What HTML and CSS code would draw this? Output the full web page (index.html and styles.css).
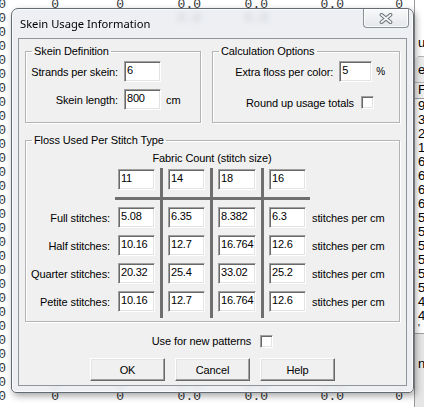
FILE: index.html
```html
<!DOCTYPE html>
<html lang="en">
<head>
  <meta charset="UTF-8">
  <title>Skein Usage Information</title>
  <link rel="stylesheet" href="styles.css">
</head>
<body>
  <div class="desk">
    <!-- spreadsheet behind the dialog -->
    <div class="sheet">
      <div class="cells">
        <div class="row"><span class="a">0</span><span class="b">0</span><span class="c">0</span><span class="d">0.0</span><span class="e">0.0</span><span class="f">0.0</span><span class="g">0</span></div>
        <div class="row"><span class="a">0</span><span class="b"></span><span class="c"></span><span class="d">0.0</span><span class="e">0.0</span></div>
        <div class="row"><span class="a">0</span></div>
        <div class="row"><span class="a">0</span></div>
        <div class="row"><span class="a">0</span></div>
        <div class="row"><span class="a">0</span></div>
        <div class="row"><span class="a">0</span></div>
        <div class="row"><span class="a">0</span></div>
        <div class="row"><span class="a">0</span></div>
        <div class="row"><span class="a">0</span></div>
        <div class="row"><span class="a">0</span></div>
        <div class="row"><span class="a">0</span></div>
        <div class="row"><span class="a">0</span></div>
        <div class="row"><span class="a">0</span></div>
        <div class="row"><span class="a">0</span></div>
        <div class="row"><span class="a">0</span></div>
        <div class="row"><span class="a">0</span></div>
        <div class="row"><span class="a">0</span></div>
        <div class="row"><span class="a">0</span></div>
        <div class="row"><span class="a">0</span></div>
        <div class="row"><span class="a">0</span></div>
        <div class="row"><span class="a">0</span></div>
        <div class="row"><span class="a">0</span></div>
        <div class="row"><span class="a">0</span></div>
        <div class="row"><span class="a">0</span></div>
        <div class="row"><span class="a">0</span></div>
        <div class="row"><span class="a">0</span></div>
        <div class="row"><span class="a">0</span><span class="b">0</span><span class="c">0</span><span class="d">0.0</span><span class="e">0.0</span><span class="f">0.0</span></div>
        <div class="row"><span class="a">0</span><span class="b">0</span><span class="c">0</span><span class="d">0.0</span><span class="e">0.0</span><span class="f">0.0</span><span class="g">0</span></div>
      </div>
      <div class="side">
        <div class="side-blank"></div>
        <div class="side-label">u</div>
        <div class="side-tab">e</div>
        <div class="side-head">F</div>
        <div class="side-num">9</div>
        <div class="side-num">3</div>
        <div class="side-num">2</div>
        <div class="side-num">1</div>
        <div class="side-num">6</div>
        <div class="side-num">6</div>
        <div class="side-num">6</div>
        <div class="side-num">6</div>
        <div class="side-num">5</div>
        <div class="side-num">5</div>
        <div class="side-num">5</div>
        <div class="side-num">5</div>
        <div class="side-num">5</div>
        <div class="side-num">5</div>
        <div class="side-num">4</div>
        <div class="side-num">4</div>
        <div class="side-cut">'</div>
        <div class="side-panel"><span>n..</span></div>
      </div>
    </div>

    <div class="dialog">
      <div class="titlebar">
        <span class="title">Skein Usage Information</span>
        <span class="close">
          <svg width="14" height="11" viewBox="0 0 14 11">
            <path d="M2.5 1.8 L11.5 9.2 M11.5 1.8 L2.5 9.2" stroke="#777c82" stroke-width="3.8" stroke-linecap="round"/>
            <path d="M2.5 1.8 L11.5 9.2 M11.5 1.8 L2.5 9.2" stroke="#fbfbfb" stroke-width="1.6" stroke-linecap="round"/>
          </svg>
        </span>
      </div>

      <div class="client">
        <div class="top">
          <fieldset class="group skein">
            <legend>Skein Definition</legend>
            <div class="form">
              <label>Strands per skein:</label><input class="box" type="text" value="6"><span></span>
              <label>Skein length:</label><input class="box" type="text" value="800"><span class="unit">cm</span>
            </div>
          </fieldset>
          <fieldset class="group calc">
            <legend>Calculation Options</legend>
            <div class="opt extra"><label>Extra floss per color:</label><input class="box small" type="text" value="5"><span class="pct">%</span></div>
            <div class="opt round"><label>Round up usage totals</label><span class="check"></span></div>
          </fieldset>
        </div>

        <fieldset class="group floss">
          <legend>Floss Used Per Stitch Type</legend>
          <div class="caption">Fabric Count (stitch size)</div>
          <div class="table">
            <span class="vline v1"></span>
            <span class="vline v2"></span>
            <span class="vline v3"></span>
            <span class="hline"></span>

            <span></span>
            <input class="box" type="text" value="11">
            <input class="box" type="text" value="14">
            <input class="box" type="text" value="18">
            <input class="box" type="text" value="16">
            <span></span>

            <span></span><span></span>

            <label>Full stitches:</label>
            <input class="box" type="text" value="5.08">
            <input class="box" type="text" value="6.35">
            <input class="box" type="text" value="8.382">
            <input class="box" type="text" value="6.3">
            <span class="per">stitches per cm</span>

            <label>Half stitches:</label>
            <input class="box" type="text" value="10.16">
            <input class="box" type="text" value="12.7">
            <input class="box" type="text" value="16.764">
            <input class="box" type="text" value="12.6">
            <span class="per">stitches per cm</span>

            <label>Quarter stitches:</label>
            <input class="box" type="text" value="20.32">
            <input class="box" type="text" value="25.4">
            <input class="box" type="text" value="33.02">
            <input class="box" type="text" value="25.2">
            <span class="per">stitches per cm</span>

            <label>Petite stitches:</label>
            <input class="box" type="text" value="10.16">
            <input class="box" type="text" value="12.7">
            <input class="box" type="text" value="16.764">
            <input class="box" type="text" value="12.6">
            <span class="per">stitches per cm</span>
          </div>
        </fieldset>

        <div class="usenew"><label>Use for new patterns</label><span class="check"></span></div>

        <div class="buttons">
          <button>OK</button>
          <button>Cancel</button>
          <button>Help</button>
        </div>
      </div>
    </div>
  </div>
</body>
</html>
```

FILE: styles.css
```css
* {
  box-sizing: border-box;
}
body {
  margin: 0;
  background: #fff;
  font-family: "Liberation Sans", Arial, sans-serif;
  font-size: 11px;
  letter-spacing: -0.1px;
  color: #000;
}
.desk {
  position: relative;
  width: 424px;
  height: 407px;
  overflow: hidden;
}

/* background spreadsheet */
.sheet {
  display: flex;
  height: 100%;
}
.cells {
  width: 414px;
  flex: none;
  margin-top: -2px;
  font-family: "Liberation Mono", monospace;
  font-size: 13px;
  letter-spacing: 0;
  color: #333;
}
.row {
  display: flex;
  height: 14px;
  line-height: 14px;
}
.row span {
  flex: none;
  text-align: right;
}
.a { width: 14px; margin-left: -8px; }
.b { width: 53px; }
.c { width: 65px; }
.d { width: 77px; }
.e { width: 67px; }
.f { width: 76px; }
.g { width: 59px; }

.side {
  flex: 1;
  display: flex;
  flex-direction: column;
  border-left: 1px solid #9a9a9a;
  font-size: 13px;
  letter-spacing: 0;
  padding-left: 3px;
  white-space: nowrap;
  overflow: hidden;
}
.side-blank { height: 35px; flex: none; }
.side-label { height: 22px; line-height: 16px; border-bottom: 1px solid #b5b5b5; }
.side-tab { height: 26px; line-height: 26px; background: #ececec; border-bottom: 1px solid #b5b5b5; margin-left: -3px; padding-left: 3px; }
.side-head { height: 16px; line-height: 14px; background: #f0f0f0; border-bottom: 1px solid #a0a0a0; margin-left: -3px; padding-left: 3px; }
.side-num { height: 14px; line-height: 14px; flex: none; }
.side-cut { height: 10px; line-height: 12px; font-size: 10px; flex: none; overflow: hidden; }
.side-panel {
  flex: 1;
  background: #e6e6e6;
  border-top: 1px solid #a0a0a0;
  margin-left: -3px;
  padding: 22px 0 0 3px;
}

/* dialog window */
.dialog {
  position: absolute;
  left: 11px;
  top: 8px;
  width: 403px;
  height: 385px;
  display: flex;
  flex-direction: column;
  padding: 0 6px 6px;
  border: 1px solid #646b73;
  border-radius: 7px 7px 5px 5px;
  background: rgba(232, 235, 240, 0.8);
  backdrop-filter: blur(3px);
  box-shadow: 2px 3px 7px rgba(0, 0, 0, 0.35), inset 0 0 0 1px rgba(255, 255, 255, 0.7);
  white-space: nowrap;
}
.titlebar {
  height: 29px;
  flex: none;
  display: flex;
  align-items: flex-start;
}
.title {
  margin: 7px 0 0 2px;
  font-family: "Noto Sans", "Open Sans", sans-serif;
  font-size: 11.2px;
  letter-spacing: 0;
  line-height: 16px;
  color: #000;
}
.close {
  margin-left: auto;
  margin-right: -2px;
  width: 46px;
  height: 19px;
  display: flex;
  align-items: center;
  justify-content: center;
  border: 1px solid #8b9097;
  border-top: none;
  border-radius: 0 0 4px 4px;
  background: linear-gradient(#f8f9fa, #e4e7eb);
  box-shadow: inset 0 0 0 1px rgba(255, 255, 255, 0.8);
}
.client {
  flex: 1;
  background: #f0f0f0;
  border: 1px solid #8e959c;
  padding: 5px 6px 0;
  display: flex;
  flex-direction: column;
}

/* group boxes */
.group {
  margin: 0;
  padding: 0;
  min-width: 0;
  border: 1px solid #b4b4b4;
  box-shadow: inset 1px 1px 0 #fff, 1px 1px 0 #fff;
}
.group legend {
  margin-left: 6px;
  padding: 0 2px;
  line-height: 14px;
}
.top {
  display: flex;
  gap: 11px;
}
.skein {
  width: 176px;
  padding: 3px 0 12px;
}
.form {
  display: grid;
  grid-template-columns: 92px 37px auto;
  grid-template-rows: 21px 21px;
  column-gap: 6px;
  row-gap: 7px;
  align-items: center;
}
.form label {
  text-align: right;
}
.unit {
  margin-left: -1px;
}
.calc {
  flex: 1;
  padding: 3px 0 0;
}
.opt {
  display: flex;
  justify-content: flex-end;
  align-items: center;
  height: 21px;
}
.extra {
  padding-right: 14px;
  gap: 6px;
}
.pct {
  margin-left: -2px;
  font-size: 10px;
}
.round {
  margin-top: 10px;
  padding-right: 25px;
  gap: 7px;
}

/* sunken controls */
.box {
  width: 37px;
  height: 21px;
  margin: 0;
  padding: 0 0 3px 2px;
  font: inherit;
  letter-spacing: -0.2px;
  color: #000;
  background: #fff;
  border: 1px solid;
  border-color: #a0a0a0 #fff #fff #a0a0a0;
  box-shadow: inset 1px 1px 0 #696969, inset -1px -1px 0 #e3e3e3;
  outline: none;
}
.box.small {
  width: 33px;
}
.check {
  width: 13px;
  height: 13px;
  background: #fff;
  border: 1px solid;
  border-color: #a0a0a0 #fff #fff #a0a0a0;
  box-shadow: inset 1px 1px 0 #696969, inset -1px -1px 0 #e3e3e3;
}

/* floss table */
.floss {
  margin-top: 10px;
  padding: 4px 0 9px;
}
.caption {
  margin-left: 92px;
  width: 188px;
  text-align: center;
  line-height: 14px;
  margin-bottom: 4px;
}
.table {
  display: grid;
  grid-template-columns: 87px 37px 3px 37px 3px 38px 3px 37px auto;
  grid-template-rows: 21px 3px 21px 21px 21px 21px;
  column-gap: 5px;
  row-gap: 7px;
  align-items: center;
}
.table .box {
  width: 100%;
}
.table label {
  text-align: right;
  padding-right: 3px;
}
.per {
  padding-left: 1px;
}
.vline {
  grid-row: 1 / -1;
  align-self: stretch;
  margin: -1px 0 -6px;
  background: #6f6f6f;
}
.v1 { grid-column: 3; }
.v2 { grid-column: 5; }
.v3 { grid-column: 7; }
.hline {
  grid-row: 2;
  grid-column: 2 / 9;
  align-self: stretch;
  margin: 0 -4px 0 -3px;
  background: #6f6f6f;
}

/* bottom area */
.usenew {
  margin-top: 12px;
  display: flex;
  justify-content: center;
  align-items: center;
  gap: 9px;
  height: 14px;
}
.buttons {
  margin-top: 10px;
  display: flex;
  justify-content: center;
  gap: 10px;
}
.buttons button {
  width: 75px;
  height: 23px;
  padding: 0;
  font: inherit;
  letter-spacing: inherit;
  color: #000;
  background: #f0f0f0;
  border: 1px solid;
  border-color: #fff #696969 #696969 #fff;
  box-shadow: inset -1px -1px 0 #a0a0a0, inset 1px 1px 0 #e3e3e3;
}
```
